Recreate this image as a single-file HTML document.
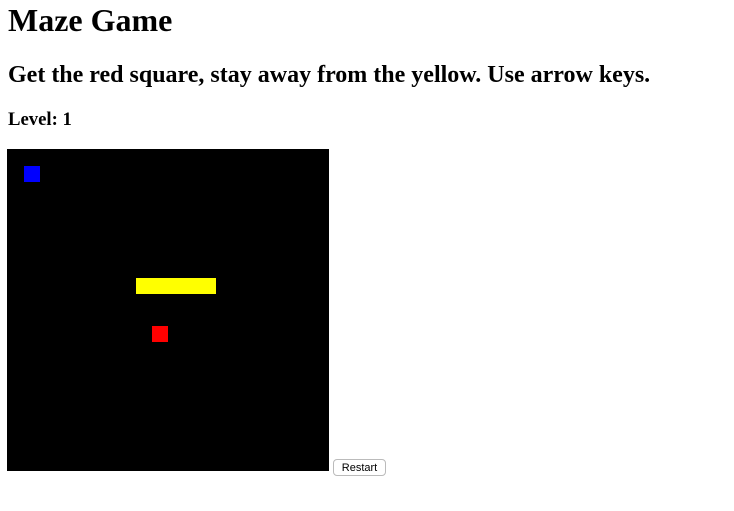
<!DOCTYPE html>
<html><head><style>
body{margin:3px 8px 8px 8px;font-family:"Liberation Serif",serif;background:#fff;}
h1{font-size:32px;margin:-1px 0 22px 0;line-height:37px;}
h2{font-size:24px;margin:0 0 20px 0;line-height:28px;}
h3{font-size:18.7px;margin:0 0 18px 0;line-height:22px;}
.row{position:relative;height:330px;}
.cv{position:absolute;left:0;top:0;width:322px;height:322px;background:#000;}
.cv div{position:absolute;}
button{position:absolute;left:326px;top:310px;width:53px;height:17px;font:11px "Liberation Sans",sans-serif;background:#fff;border:1px solid #bbb;border-radius:4px;padding:0;}
</style></head><body>
<h1>Maze Game</h1>
<h2>Get the red square, stay away from the yellow. Use arrow keys.</h2>
<h3>Level: 1</h3>
<div class="row" style="margin-left:-1px">
<div class="cv">
<div style="left:17px;top:17px;width:16px;height:16px;background:#00f"></div>
<div style="left:129px;top:129px;width:80px;height:16px;background:#ff0"></div>
<div style="left:145px;top:177px;width:16px;height:16px;background:#f00"></div>
</div>
<button>Restart</button>
</div>
</body></html>
